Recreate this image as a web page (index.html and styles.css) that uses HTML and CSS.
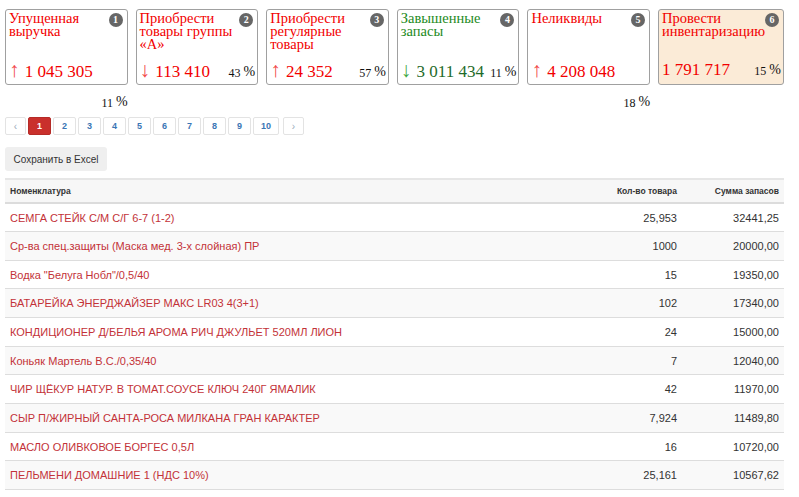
FILE: index.html
```html
<!DOCTYPE html>
<html lang="ru">
<head>
<meta charset="utf-8">
<title>Отчёт</title>
<link rel="stylesheet" href="styles.css">
</head>
<body>
<div class="page">
  <div class="cards">
    <div class="card">
      <div class="card-head"><div class="title red">Упущенная выручка</div><span class="badge">1</span></div>
      <div class="foot below">
        <span class="num red"><span class="arr">↑</span> 1 045 305</span>
        <span class="pct">11 <span class="ps">%</span></span>
      </div>
    </div>
    <div class="card">
      <div class="card-head"><div class="title red">Приобрести товары группы «А»</div><span class="badge">2</span></div>
      <div class="foot">
        <span class="num red"><span class="arr">↓</span> 113 410</span>
        <span class="pct">43 <span class="ps">%</span></span>
      </div>
    </div>
    <div class="card">
      <div class="card-head"><div class="title red">Приобрести регулярные товары</div><span class="badge">3</span></div>
      <div class="foot">
        <span class="num red"><span class="arr">↑</span> 24 352</span>
        <span class="pct">57 <span class="ps">%</span></span>
      </div>
    </div>
    <div class="card">
      <div class="card-head"><div class="title green">Завышенные запасы</div><span class="badge">4</span></div>
      <div class="foot">
        <span class="num dgreen"><span class="arr green">↓</span> 3 011 434</span>
        <span class="pct">11 <span class="ps">%</span></span>
      </div>
    </div>
    <div class="card">
      <div class="card-head"><div class="title red">Неликвиды</div><span class="badge">5</span></div>
      <div class="foot below">
        <span class="num red"><span class="arr">↑</span> 4 208 048</span>
        <span class="pct">18 <span class="ps">%</span></span>
      </div>
    </div>
    <div class="card card-hl">
      <div class="card-head"><div class="title red">Провести инвентаризацию</div><span class="badge">6</span></div>
      <div class="foot">
        <span class="num red">1 791 717</span>
        <span class="pct">15 <span class="ps">%</span></span>
      </div>
    </div>
  </div>

  <ul class="pager">
    <li class="pg pg-arrow">‹</li>
    <li class="pg active">1</li>
    <li class="pg">2</li>
    <li class="pg">3</li>
    <li class="pg">4</li>
    <li class="pg">5</li>
    <li class="pg">6</li>
    <li class="pg">7</li>
    <li class="pg">8</li>
    <li class="pg">9</li>
    <li class="pg pg-wide">10</li>
    <li class="pg pg-arrow">›</li>
  </ul>

  <button class="btn">Сохранить в Excel</button>

  <table class="grid">
    <thead>
      <tr><th class="c-name">Номенклатура</th><th class="c-qty">Кол-во товара</th><th class="c-sum">Сумма запасов</th></tr>
    </thead>
    <tbody>
      <tr><td class="c-name">СЕМГА СТЕЙК С/М С/Г 6-7 (1-2)</td><td class="c-qty">25,953</td><td class="c-sum">32441,25</td></tr>
      <tr><td class="c-name">Ср-ва спец.защиты (Маска мед. 3-х слойная) ПР</td><td class="c-qty">1000</td><td class="c-sum">20000,00</td></tr>
      <tr><td class="c-name">Водка "Белуга Нобл"/0,5/40</td><td class="c-qty">15</td><td class="c-sum">19350,00</td></tr>
      <tr><td class="c-name">БАТАРЕЙКА ЭНЕРДЖАЙЗЕР МАКС LR03 4(3+1)</td><td class="c-qty">102</td><td class="c-sum">17340,00</td></tr>
      <tr><td class="c-name">КОНДИЦИОНЕР Д/БЕЛЬЯ АРОМА РИЧ ДЖУЛЬЕТ 520МЛ ЛИОН</td><td class="c-qty">24</td><td class="c-sum">15000,00</td></tr>
      <tr><td class="c-name">Коньяк Мартель В.С./0,35/40</td><td class="c-qty">7</td><td class="c-sum">12040,00</td></tr>
      <tr><td class="c-name">ЧИР ЩЁКУР НАТУР. В ТОМАТ.СОУСЕ КЛЮЧ 240Г ЯМАЛИК</td><td class="c-qty">42</td><td class="c-sum">11970,00</td></tr>
      <tr><td class="c-name">СЫР П/ЖИРНЫЙ САНТА-РОСА МИЛКАНА ГРАН КАРАКТЕР</td><td class="c-qty">7,924</td><td class="c-sum">11489,80</td></tr>
      <tr><td class="c-name">МАСЛО ОЛИВКОВОЕ БОРГЕС 0,5Л</td><td class="c-qty">16</td><td class="c-sum">10720,00</td></tr>
      <tr><td class="c-name">ПЕЛЬМЕНИ ДОМАШНИЕ 1 (НДС 10%)</td><td class="c-qty">25,161</td><td class="c-sum">10567,62</td></tr>
    </tbody>
  </table>
</div>
</body>
</html>
```
FILE: styles.css
```css
* { box-sizing: border-box; }
html, body { margin: 0; padding: 0; background: #fff; }
body { font-family: "Liberation Sans", Arial, sans-serif; color: #333; }

.page { padding: 9px 15px 0 5px; }

/* cards */
.cards {
  display: grid;
  grid-template-columns: repeat(6, 1fr);
  gap: 8px;
}
.card {
  height: 76px;
  border: 1px solid #a0a0a0;
  border-radius: 3px;
  background: #fff;
  padding: 2px 2px 3px 3px;
  display: flex;
  flex-direction: column;
  justify-content: space-between;
  font-family: "Liberation Serif", "Times New Roman", serif;
}
.card-hl { background: #fbebd7; }
.card-head { display: flex; justify-content: space-between; align-items: flex-start; }
.title { font-size: 14.5px; line-height: 13px; max-width: 106px; }
.badge {
  flex: none;
  width: 14px; height: 14px;
  margin-top: 1px;
  margin-right: 2px;
  border-radius: 50%;
  background: #666;
  color: #fff;
  font-size: 10px;
  font-weight: bold;
  line-height: 14px;
  text-align: center;
}
.red { color: #f20000; }
.green { color: #1d8a22; }
.dgreen { color: #1f6b2a; }
.arr { color: #f24a4a; font-size: 21px; margin-right: 1px; }
.arr.green { color: #3fa83f; }

.foot {
  height: 22px;
  display: flex;
  flex-wrap: wrap;
  align-items: baseline;
  justify-content: space-between;
}
.num { font-size: 17px; line-height: 22px; white-space: nowrap; }
.pct { font-size: 12px; color: #111; margin-left: auto; white-space: nowrap; }
.ps { font-size: 14px; position: relative; top: -1px; }
.below .pct { flex-basis: 100%; text-align: right; margin-top: 12px; margin-right: -3px; }

/* pager */
.pager {
  list-style: none;
  margin: 32px 0 0 0;
  padding: 0;
  display: flex;
  gap: 2px;
}
.pg {
  width: 23px;
  height: 18px;
  border: 1px solid #e3e3e3;
  border-radius: 2px;
  font-size: 9px;
  font-weight: bold;
  color: #3a76b5;
  display: flex;
  align-items: center;
  justify-content: center;
}
.pg-arrow { width: 21px; color: #9ab; font-weight: normal; font-size: 10px; }
.pg-wide { width: 26px; margin-right: 2px; }
.pg.active { background: #c9302c; border-color: #b52b27; color: #fff; }

/* button */
.btn {
  display: block;
  margin-top: 12px;
  width: 102px;
  height: 24px;
  border: none;
  border-radius: 3px;
  background: #efefef;
  color: #333;
  font-family: "Liberation Sans", Arial, sans-serif;
  font-size: 10px;
  padding: 0;
  text-align: center;
}

/* table */
.grid {
  margin-top: 7px;
  width: 100%;
  border-collapse: collapse;
  font-size: 11px;
}
.grid th {
  font-size: 8.5px;
  font-weight: bold;
  color: #333;
  height: 24px;
  padding: 0 5px;
  background: #f7f7f7;
  border-top: 2px solid #e6e6e6;
  border-bottom: 2px solid #dcdcdc;
}
.grid td {
  height: 28.67px;
  padding: 0 5px;
  border-bottom: 1px solid #dddddd;
  color: #333;
}
.grid tbody tr:nth-child(even) td { background: #f9f9f9; }
.c-name { text-align: left; }
.grid td.c-name { color: #c33238; }
.c-qty { text-align: right; width: 130px; }
.c-sum { text-align: right; width: 102px; }
```
